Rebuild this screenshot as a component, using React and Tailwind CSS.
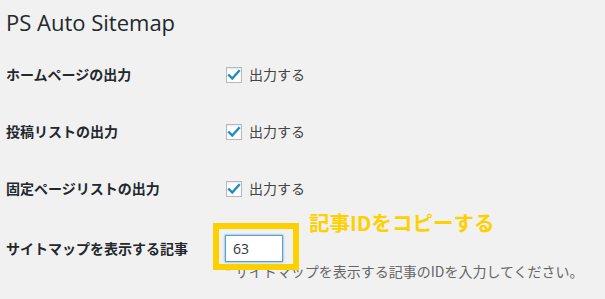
import React from "react";

const jp = { fontFamily: '"Noto Sans CJK JP", "Noto Sans", sans-serif' };

function Check() {
  return (
    <span className="flex h-[16px] w-[16px] items-center justify-center border border-[#b4b9be] bg-white shadow-[inset_0_1px_2px_rgba(0,0,0,0.1)]">
      <svg width="14" height="14" viewBox="0 0 20 20">
        <path d="M3 10.5 L7.5 15 L17 4.5" fill="none" stroke="#1e8cbe" strokeWidth="3.4" strokeLinecap="square" strokeLinejoin="miter" />
      </svg>
    </span>
  );
}

function Row({ label }) {
  return (
    <div className="flex h-[57px] items-center">
      <div className="w-[220px] text-[14px] font-bold text-[#23282d]" style={jp}>{label}</div>
      <div className="flex items-center gap-[7px]">
        <Check />
        <span className="text-[14px] text-[#444]" style={jp}>出力する</span>
      </div>
    </div>
  );
}

export default function App() {
  return (
    <div className="relative h-[299px] w-[605px] overflow-hidden bg-[#f1f1f1] pl-[6px]">
      <h1 className="pt-[7px] text-[22px] leading-[30px] text-[#23282d]" style={{ fontFamily: '"Open Sans", sans-serif' }}>
        PS Auto Sitemap
      </h1>
      <div className="mt-[9px]">
        <Row label="ホームページの出力" />
        <Row label="投稿リストの出力" />
        <Row label="固定ページリストの出力" />
        <div className="flex pt-[18px]">
          <div className="flex h-[27px] w-[219px] items-center text-[14px] font-bold text-[#23282d]" style={jp}>サイトマップを表示する記事</div>
          <div className="flex flex-col">
            <div className="flex h-[27px] w-[58px] items-center border border-[#5b9dd9] bg-white pl-[7px] text-[14px] text-[#32373c] shadow-[0_0_2px_rgba(30,140,190,0.8)]" style={{ fontFamily: '"Open Sans", sans-serif' }}>
              63
            </div>
            <div className="-mt-[1px] whitespace-nowrap text-[14px] text-[#666]" style={jp}>* サイトマップを表示する記事のIDを入力してください。</div>
          </div>
        </div>
      </div>
      <div className="absolute left-[213px] top-[223px] h-[47px] w-[86px] border-[6px] border-[#ffd000]" />
      <div className="absolute left-[309px] top-[209px] whitespace-nowrap text-[20.5px] font-bold leading-[26px] text-[#ffd000]" style={jp}>
        記事IDをコピーする
      </div>
    </div>
  );
}
